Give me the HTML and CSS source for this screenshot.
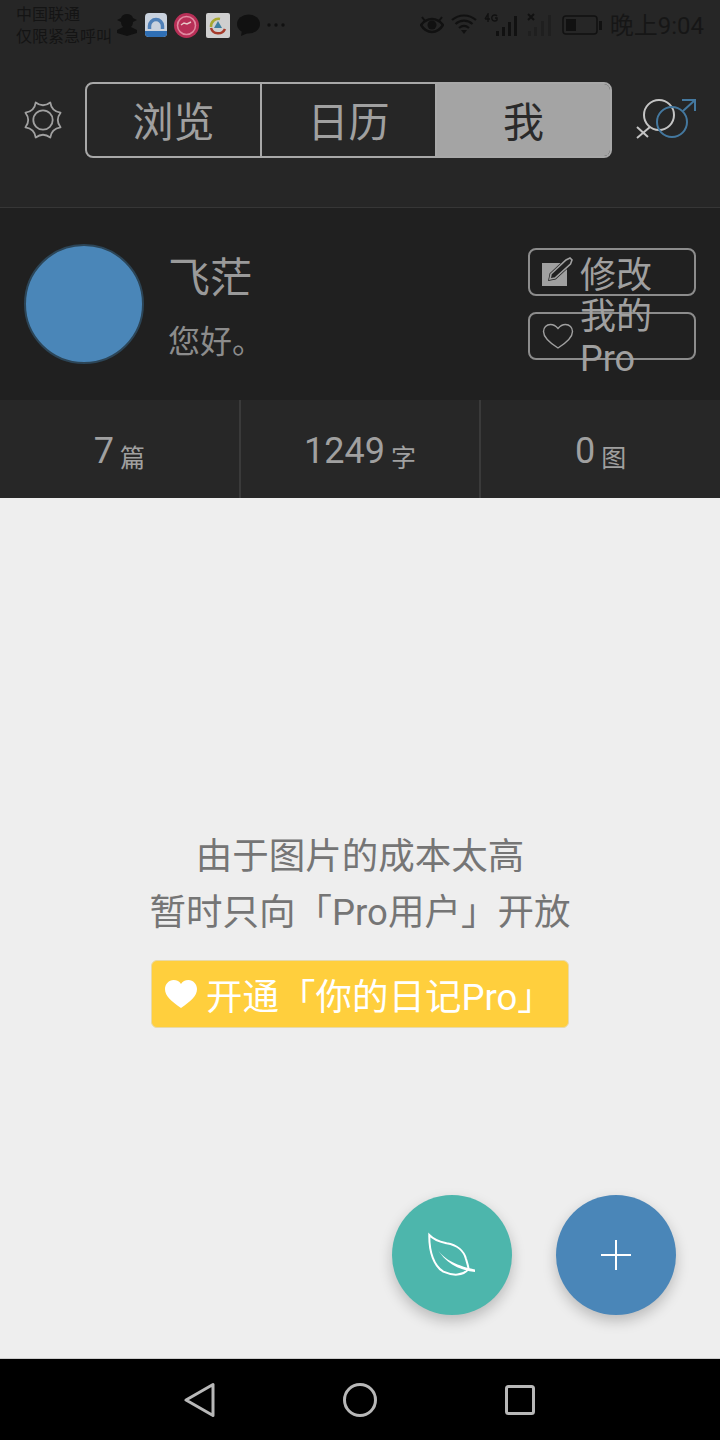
FILE: index.html
```html
<!DOCTYPE html>
<html>
<head>
  <title>你的日记</title>
  <link rel="stylesheet" href="styles.css">
</head>
<body>
<div class="screen">
  <div class="top">
    <div class="statusbar">
      <div class="carrier">
        <div>中国联通</div>
        <div>仅限紧急呼叫</div>
      </div>
      <div class="notify">
        <svg width="22" height="24" viewBox="0 0 22 24"><path fill="#111" d="M11 1c3 0 5 1 6 4l4 2-4 2c0 2-1 4-2 5l6 3v3l-10 3-10-3v-3l6-3c-1-1-2-3-2-5L1 7l4-2c1-3 3-4 6-4z"/></svg>
        <svg width="22" height="24" viewBox="0 0 22 24"><rect width="22" height="24" rx="4" fill="#c9d2de"/><path d="M0 18h22v2a4 4 0 0 1-4 4H4a4 4 0 0 1-4-4z" fill="#2f6fb5"/><path d="M4.500 16v-3a6.500 6.500 0 0 1 13 0v3" fill="none" stroke="#4f80b8" stroke-width="3.500"/></svg>
        <svg width="25" height="25" viewBox="0 0 25 25"><circle cx="12.500" cy="12.500" r="12.500" fill="#b82f57"/><circle cx="12.500" cy="12.500" r="9" fill="none" stroke="#e08aa0" stroke-width="1.500"/><path d="M7 12l3-2 3 1 4-2" fill="none" stroke="#e8c8c8" stroke-width="1.500"/></svg>
        <svg width="24" height="25" viewBox="0 0 24 25"><rect width="24" height="25" rx="2" fill="#cfcfcf"/><path d="M5 14a7.500 7.500 0 0 1 9-8" fill="none" stroke="#a8a830" stroke-width="2.500"/><path d="M5 15a7.500 7.500 0 0 0 14 1" fill="none" stroke="#a53a2a" stroke-width="2.500"/><path d="M12 8l4 7H8z" fill="#3f7f9f"/></svg>
        <svg width="23" height="22" viewBox="0 0 23 22"><ellipse cx="11.500" cy="10" rx="11.500" ry="9.500" fill="#111"/><path d="M5 16l-1 6 7-3z" fill="#111"/></svg>
        <svg width="18" height="6" viewBox="0 0 18 6"><circle cx="2" cy="3" r="1.700" fill="#111"/><circle cx="9" cy="3" r="1.700" fill="#111"/><circle cx="16" cy="3" r="1.700" fill="#111"/></svg>
      </div>
      <div class="sysicons">
        <svg width="24" height="22" viewBox="0 0 24 22"><path d="M1 11c3-4 7-6 11-6s8 2 11 6c-3 5-7 7-11 7S4 16 1 11z" fill="none" stroke="#111" stroke-width="2.500"/><circle cx="12" cy="11" r="4.500" fill="#111"/><path d="M2 3l3 4M22 3l-3 4" stroke="#111" stroke-width="2"/></svg>
        <svg width="26" height="24" viewBox="0 0 26 24"><path d="M1 7c7-6 17-6 24 0M4.500 11c5-4.500 12-4.500 17 0M8 15c3-2.500 7-2.500 10 0" fill="none" stroke="#111" stroke-width="2.200"/><path d="M10 17h6l-3 4z" fill="#111"/></svg>
        <svg width="36" height="24" viewBox="0 0 36 24"><rect x="12" y="18" width="3" height="5" fill="#111"/><rect x="18" y="14" width="3" height="9" fill="#111"/><rect x="24" y="9" width="3" height="14" fill="#111"/><rect x="30" y="3" width="3" height="20" fill="#111"/><path d="M1 6l3-5v8M1 6h5M13 3a3 3 0 1 0 0 4V5h-2" fill="none" stroke="#111" stroke-width="1.400"/></svg>
        <svg width="24" height="24" viewBox="0 0 24 24"><path d="M1 1l6 6M7 1L1 7" stroke="#111" stroke-width="2"/><rect x="1" y="18" width="3" height="5" fill="#1f1f1f"/><rect x="7" y="14" width="3" height="9" fill="#1f1f1f"/><rect x="14" y="8" width="3" height="15" fill="#1f1f1f"/><rect x="21" y="2" width="3" height="21" fill="#1f1f1f"/></svg>
        <svg class="battery" width="40" height="20" viewBox="0 0 40 20"><rect x="1" y="1" width="34" height="18" rx="3" fill="none" stroke="#111" stroke-width="1.500"/><rect x="4" y="4" width="10" height="12" fill="#111"/><rect x="37" y="6" width="3" height="9" fill="#111"/></svg>
        <span class="clock">晚上9:04</span>
      </div>
    </div>
    <div class="toolbar">
      <svg class="gear" width="40" height="40" viewBox="0 0 40 40">
        <path d="M12.730 2.450Q20 8 27.270 2.450Q28.500 11.500 37.550 12.730Q32 20 37.550 27.270Q28.500 28.500 27.270 37.550Q20 32 12.730 37.550Q11.500 28.500 2.450 27.270Q8 20 2.450 12.730Q11.500 11.500 12.730 2.450z" fill="none" stroke="#a0a0a0" stroke-width="1.800" stroke-linejoin="round"/>
        <circle cx="20" cy="20" r="9.700" fill="none" stroke="#a0a0a0" stroke-width="1.800"/>
      </svg>
      <div class="tabs">
        <div class="tab">浏览</div>
        <div class="tab">日历</div>
        <div class="tab active">我</div>
      </div>
      <svg class="gender" width="62" height="48" viewBox="0 0 62 48">
        <circle cx="24" cy="19" r="15" fill="none" stroke="#c4c4c4" stroke-width="2"/>
        <path d="M15 31L2 42M2 31l11 10" fill="none" stroke="#c4c4c4" stroke-width="2"/>
        <circle cx="37" cy="26" r="15" fill="none" stroke="#44789f" stroke-width="2"/>
        <path d="M48 15L60 4M47 4h13v11" fill="none" stroke="#44789f" stroke-width="2"/>
      </svg>
    </div>
  </div>

  <div class="profile">
    <div class="avatar"></div>
    <div class="who">
      <div class="name">飞茫</div>
      <div class="hello">您好。</div>
    </div>
    <div class="actions">
      <div class="action">
        <svg width="32" height="30" viewBox="0 0 32 30">
          <rect x="0" y="6" width="25" height="23" fill="#a0a0a0"/>
          <path d="M9 17L24 3l4-2 2 2-1.500 4L13 21l-5 1z" fill="#202020" stroke="#202020" stroke-width="3"/>
          <path d="M9 17L24 3l4-2 2 2-1.500 4L13 21l-5 1z" fill="#202020" stroke="#a0a0a0" stroke-width="1.600"/>
        </svg>
        <span class="action-text">修改</span>
      </div>
      <div class="action">
        <svg width="32" height="26" viewBox="0 0 32 26">
          <path d="M16 25C8 20 1.500 15 1.500 8.500 1.500 4.500 4.500 1.500 8.500 1.500c3 0 5.500 1.500 7.500 4 2-2.500 4.500-4 7.500-4 4 0 7 3 7 7C30.500 15 24 20 16 25z" fill="none" stroke="#a0a0a0" stroke-width="1.400"/>
        </svg>
        <span class="action-text">我的Pro</span>
      </div>
    </div>
  </div>

  <div class="stats">
    <div class="stat"><span class="num">7</span><span class="unit">篇</span></div>
    <div class="stat"><span class="num">1249</span><span class="unit">字</span></div>
    <div class="stat"><span class="num">0</span><span class="unit">图</span></div>
  </div>

  <div class="content">
    <p class="notice">由于图片的成本太高<br>暂时只向「Pro用户」开放</p>
    <div class="pro-btn">
      <svg width="34" height="28" viewBox="0 0 34 28"><path d="M17 28C7 21 1 16 1 9c0-5 4-9 8.500-9C13 0 15.500 1.500 17 4c1.500-2.500 4-4 7.500-4C29 0 33 4 33 9c0 7-6 12-16 19z" fill="#fff"/></svg>
      <span>开通「你的日记Pro」</span>
    </div>
    <div class="fab fab-leaf">
      <svg width="50" height="46" viewBox="0 0 50 46">
        <path d="M2.300 3C8 9 14 10 19.700 11.300 30 13 37 19 39 27c1.500 5 2.500 8 2.500 10C36 44 26 44 16.300 39.700 7 34 2 20 2.300 3z" fill="none" stroke="#fff" stroke-width="2"/>
        <path d="M9.700 16.300C16 26 26 33 48 37.500V40C30 38 18 30 9.700 16.300z" fill="#fff"/>
      </svg>
    </div>
    <div class="fab fab-add">
      <svg width="32" height="32" viewBox="0 0 32 32"><path d="M16 1v30M1 16h30" stroke="#fff" stroke-width="2"/></svg>
    </div>
  </div>

  <div class="navbar">
    <svg width="32" height="36" viewBox="0 0 32 36"><path d="M29 2.500v31L2 18z" fill="none" stroke="#b8b8b8" stroke-width="3" stroke-linejoin="round"/></svg>
    <svg width="34" height="34" viewBox="0 0 34 34"><circle cx="17" cy="17" r="15.500" fill="none" stroke="#b8b8b8" stroke-width="3"/></svg>
    <svg width="32" height="32" viewBox="0 0 32 32"><rect x="2.500" y="2.500" width="27" height="27" rx="2" fill="none" stroke="#b8b8b8" stroke-width="3"/></svg>
  </div>
</div>
</body>
</html>
```

FILE: styles.css
```css
html, body {
  margin: 0;
  padding: 0;
}

body {
  font-family: Roboto, "Noto Sans CJK SC", sans-serif;
  text-spacing-trim: space-all;
}

.screen {
  width: 720px;
  height: 1440px;
  display: flex;
  flex-direction: column;
  overflow: hidden;
}

.top {
  height: 207px;
  background-color: #262626;
  border-bottom: 1px solid #363636;
}

/* 状态栏 */
.statusbar {
  height: 50px;
  display: flex;
  align-items: center;
  padding: 0 16px;
  color: #141414;
}

.carrier {
  font-size: 16px;
  line-height: 22px;
  width: 100px;
  padding-top: 2px;
}

.notify {
  display: flex;
  align-items: center;
  gap: 7px;
}

.sysicons {
  margin-left: auto;
  display: flex;
  align-items: center;
  gap: 7px;
}

.battery {
  margin-left: 4px;
}

.clock {
  font-size: 24px;
  margin-left: 1px;
  padding-bottom: 4px;
  color: #161616;
}

/* 顶部选项卡 */
.toolbar {
  display: flex;
  align-items: center;
  height: 76px;
  margin-top: 32px;
  padding-left: 23px;
}

.gear {
  margin-right: 22px;
}

.tabs {
  width: 527px;
  height: 76px;
  box-sizing: border-box;
  display: flex;
  border: 2px solid #a8a8a8;
  border-radius: 8px;
  overflow: hidden;
}

.tab {
  flex: 0 0 175px;
  box-sizing: border-box;
  border-right: 2px solid #a8a8a8;
  color: #a0a0a0;
  font-size: 41px;
  padding-bottom: 2px;
  display: flex;
  align-items: center;
  justify-content: center;
}

.tab.active {
  flex: 1;
  border-right: 0;
  background-color: #a4a4a4;
  color: #2a2a2a;
}

.gender {
  margin-left: 23px;
}

/* 个人信息 */
.profile {
  height: 192px;
  background-color: #202020;
  display: flex;
  align-items: center;
  padding: 0 24px;
  box-sizing: border-box;
}

.avatar {
  width: 116px;
  height: 116px;
  border-radius: 50%;
  background-color: #4a86b8;
  border: 2px solid #2c4557;
  flex-shrink: 0;
}

.who {
  margin-left: 24px;
  margin-top: 8px;
}

.name {
  font-size: 42px;
  line-height: 50px;
  color: #9a9a9a;
}

.hello {
  font-size: 32px;
  line-height: 42px;
  margin-top: 17px;
  color: #8c8c8c;
}

.actions {
  margin-left: auto;
  display: flex;
  flex-direction: column;
  gap: 16px;
}

.action {
  width: 168px;
  height: 48px;
  box-sizing: border-box;
  border: 2px solid #8c8c8c;
  border-radius: 8px;
  display: flex;
  align-items: center;
  padding-left: 12px;
  gap: 6px;
  color: #a0a0a0;
}

.action svg {
  flex-shrink: 0;
}

.action-text {
  font-size: 36px;
  line-height: 42px;
  width: 76px;
  margin-top: 4px;
}

.action:first-child .action-text {
  margin-top: 7px;
}

/* 统计 */
.stats {
  height: 98px;
  background-color: #272727;
  display: flex;
}

.stat {
  flex: 1;
  display: flex;
  align-items: center;
  justify-content: center;
  gap: 6px;
  box-sizing: border-box;
  border-right: 2px solid #3a3a3a;
  color: #a0a0a0;
}

.stat:last-child {
  border-right: 0;
}

.num {
  font-size: 36px;
  margin-top: 4px;
}

.unit {
  font-size: 25px;
  margin-top: 14px;
}

/* 图片页 */
.content {
  position: relative;
  flex: 1;
  background-color: #eeeeee;
  border-bottom: 1px solid #cccccc;
  display: flex;
  flex-direction: column;
  align-items: center;
  padding-top: 331px;
}

.notice {
  margin: 0;
  font-size: 36.500px;
  line-height: 56px;
  color: #757575;
  text-align: center;
}

.pro-btn {
  margin-top: 19px;
  width: 418px;
  height: 68px;
  box-sizing: border-box;
  background-color: #ffcf3d;
  border: 1px solid #e8d9a8;
  border-radius: 6px;
  display: flex;
  align-items: center;
  padding-left: 12px;
  gap: 8px;
  color: #fff;
  font-size: 36.500px;
}

.fab {
  position: absolute;
  top: 697px;
  width: 120px;
  height: 120px;
  border-radius: 50%;
  display: flex;
  align-items: center;
  justify-content: center;
  box-shadow: 0 6px 14px rgba(0, 0, 0, 0.22);
}

.fab-leaf {
  left: 392px;
  background-color: #4db6ac;
}

.fab-add {
  left: 556px;
  background-color: #4a86b8;
}

/* 导航栏 */
.navbar {
  height: 81px;
  background-color: #000;
  display: flex;
  align-items: center;
  justify-content: space-between;
  padding: 0 184px;
}
```
